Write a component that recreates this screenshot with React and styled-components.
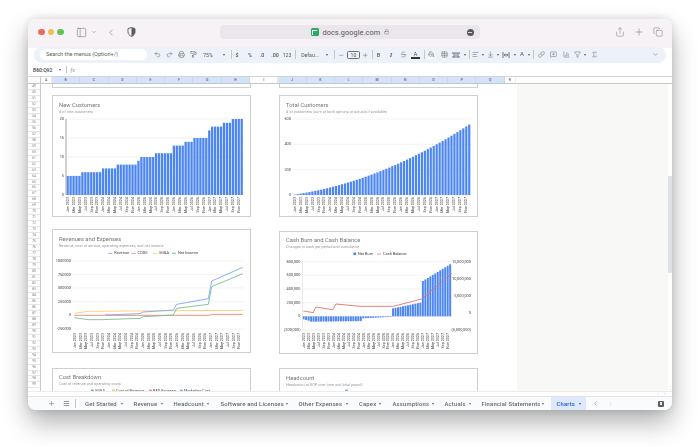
import React from 'react';
import styled, { createGlobalStyle } from 'styled-components';
import {
  PanelLeft, ChevronDown, ChevronLeft, ChevronRight, Share, Plus, Copy, Lock, Undo2, Redo2, Printer, PaintRoller,
  Strikethrough, PaintBucket, Table, AlignLeft, ArrowDownToLine, Link, MessageSquarePlus, ChartColumn, Filter, Sigma, Menu, Minus,
} from 'lucide-react';

const Global = createGlobalStyle`
  html, body { margin: 0; padding: 0; background: #fff; width: 700px; height: 447px; overflow: hidden; }
  * { box-sizing: border-box; }
  body { font-family: Roboto, "Liberation Sans", sans-serif; }
`;

const Page = styled.div`
  width: 700px; height: 447px; padding: 19px 28px 0; background: #fff; overflow: hidden;
`;
const Win = styled.div`
  width: 644px; height: 391px; border-radius: 8px; background: #fff; overflow: hidden; display: flex; flex-direction: column;
  box-shadow: 0 13px 26px rgba(0,0,0,.3), 0 0 10px rgba(0,0,0,.14);
  filter: blur(0.5px);
`;
const TitleBar = styled.div`
  height: 27px; flex: none; background: #f7f2f6; display: flex; align-items: center; padding: 0 9px 1px 10px; color: #6a6a6e;
`;
const Light = styled.span`
  width: 6.5px; height: 6.5px; border-radius: 50%; background: ${p => p.$c}; margin-right: 3.2px; flex: none;
`;
const TitleIcon = styled.span`
  display: flex; align-items: center; justify-content: center; flex: none; width: ${p => p.$w}px; margin-left: ${p => p.$ml}px;
`;
const UrlBar = styled.div`
  position: relative; margin-left: ${p => p.$ml}px; width: 260px; height: 14px; border-radius: 4px; background: #ebe6eb; flex: none;
  display: flex; align-items: center; justify-content: center; gap: 3.5px; color: #55555a;
  font-size: 7.3px; letter-spacing: .1px;
`;
const Favicon = styled.span`
  width: 8px; height: 8px; border-radius: 1.5px; background: #2da866; display: flex; align-items: center; justify-content: center; flex: none;
  &::after { content: ''; width: 4px; height: 4px; border-top: 1px solid #fff; border-left: 1px solid #fff; }
`;
const Reader = styled.span`
  position: absolute; left: 246.5px; top: 3.5px; width: 7px; height: 7px; border-radius: 50%; background: #58585c;
  display: flex; align-items: center; justify-content: center;
  &::after { content: ''; width: 4px; height: 1px; background: #d8d8d8; }
`;
const RightTools = styled.div`
  margin-left: auto; display: flex; align-items: center; gap: 9px;
`;

const ToolArea = styled.div`
  height: 17px; flex: none; padding: 1px 6px 0;
  background: linear-gradient(#f7f2f6 0 2px, #fff 2px);
`;
const Pill = styled.div`
  height: 15.5px; border-radius: 8px; background: #edf2fa; display: flex; align-items: center; padding-left: 6px; color: #54575a; font-size: 5.2px;
`;
const Search = styled.div`
  width: 107px; height: 11px; flex: none; border-radius: 6px; background: #fff; color: #5c5f62; font-size: 5.6px; line-height: 11px; padding-left: 6px; white-space: nowrap;
`;
const Slot = styled.span`
  flex: none; display: flex; align-items: center; justify-content: center; width: ${p => p.$w}px; margin-left: ${p => p.$ml}px; height: 10px; white-space: nowrap;
`;
const Sep = styled.span`
  display: block; width: .6px; height: 9px; background: #c7c7c7;
`;
const Caret = styled.span`
  display: inline-block; flex: none; width: 0; height: 0; border-left: 1.7px solid transparent; border-right: 1.7px solid transparent; border-top: 2px solid ${p => p.$c || '#54575a'};
`;
const SizeBox = styled.span`
  width: 13px; height: 8.5px; border: .8px solid #6b6f72; border-radius: 1.5px; display: flex; align-items: center; justify-content: center; font-size: 5.2px;
`;
const ColorA = styled.span`
  display: flex; flex-direction: column; align-items: center; font-size: 6px; line-height: 6px; font-weight: 400;
  &::after { content: ''; width: 9px; height: 2px; background: ${p => p.$bar}; margin-top: .5px; }
`;
const Fill = styled.span`
  display: flex; flex-direction: column; align-items: center;
  &::after { content: ''; width: 9px; height: 1.5px; background: #fff; margin-top: .5px; }
`;
const Strong = styled.b`font-family: Roboto, sans-serif; font-size: 5.4px; font-weight: 500;`;
const Ital = styled.i`font-family: "Liberation Serif", serif; font-size: 6.5px; font-weight: 700;`;

const FormulaBar = styled.div`
  height: 13px; flex: none; background: #fff; display: flex; align-items: center; padding-left: 5px; font-size: 5.1px; color: #444746;
`;
const NameBox = styled.span`
  width: 26px; font-weight: 500; letter-spacing: -.05px;
`;
const FxSep = styled.span`
  width: .6px; height: 7px; background: #c7c7c7; margin: 0 4px 0 5px;
`;
const Fx = styled.i`
  font-family: "Liberation Serif", serif; font-size: 6px; color: #8a8a8a;
`;

const ColHeader = styled.div`
  height: 8px; flex: none; display: flex; background: #fff; border-top: .6px solid #d4d4d4; border-bottom: 1px solid #c4c7c5;
`;
const Corner = styled.div`
  width: 13px; flex: none; background: #fbfbfb; border-right: 1.2px solid #c4c7c5;
`;
const ColCell = styled.div`
  flex: none; width: ${p => p.$w}px; font-size: 3.4px; line-height: 6.5px; text-align: center; color: #5a5d60; font-weight: 500;
  background: ${p => (p.$on ? '#d3e3fd' : '#fff')}; border-right: .4px solid ${p => (p.$on ? '#c4d6f3' : '#ececec')};
`;

const SheetRow = styled.div`
  height: 307px; flex: none; display: flex; overflow: hidden;
`;
const RowHead = styled.div`
  width: 13px; flex: none; background: #fff; border-right: .8px solid #c9c9c9; overflow: hidden;
`;
const RowNum = styled.div`
  height: 5.97px; font-size: 3.2px; line-height: 5.6px; text-align: center; color: #77797b; border-bottom: .4px solid #e6e6e6;
`;
const Canvas = styled.div`
  width: 476px; flex: none; display: flex; gap: 28px; padding-left: 11px; background: #fff; overflow: hidden;
`;
const ChartCol = styled.div`
  width: 199px; flex: none; display: flex; flex-direction: column;
`;
const Stub = styled.div`
  height: 4px; flex: none; border: 1px solid #cfcfcf; border-top: none;
`;
const Card = styled.div`
  flex: none; height: ${p => p.$h}px; margin-top: ${p => p.$mt}px; border: 1px solid #cfcfcf; background: #fff; overflow: hidden;
`;
const CardHead = styled.div`
  height: ${p => p.$h}px; padding: ${p => p.$pt}px 0 0 6px;
`;
const Title = styled.div`
  font-size: 5.8px; line-height: 8px; color: #757575; white-space: nowrap;
`;
const Sub = styled.div`
  font-size: 3.85px; line-height: 6px; color: #9c9c9c; white-space: nowrap;
`;
const Plot = styled.svg`
  display: block; font-family: Roboto, "Liberation Sans", sans-serif;
`;
const GreyPane = styled.div`
  flex: 1; background: #f8f9f7;
`;
const VScroll = styled.div`
  width: 4px; flex: none; background: #fff; padding-top: 92px; display: flex; flex-direction: column; color: #a8a8a8;
`;
const Thumb = styled.div`
  height: 97px; flex: none; background: #dde0e4; border-radius: 1px;
`;
const VArrows = styled.div`
  margin-top: auto; display: flex; flex-direction: column; align-items: center;
`;
const HScroll = styled.div`
  height: 5px; flex: none; background: #fff; border-top: .6px solid #ececec; display: flex; justify-content: flex-end; align-items: center; gap: 3px; padding-right: 6px; color: #a8a8a8;
`;

const TabBar = styled.div`
  height: 14px; flex: 1; background: #f9fbfd; border-top: .6px solid #e3e3e3; display: flex; align-items: stretch; color: #5b5e61; padding-left: 19px;
`;
const BarIcon = styled.span`
  display: flex; align-items: center; justify-content: center; flex: none; width: ${p => p.$w}px; margin-left: ${p => p.$ml || 0}px; color: ${p => p.$c || 'inherit'};
`;
const Tab = styled.div`
  flex: none; width: ${p => p.$w}px; margin-left: ${p => p.$ml || 0}px; padding: 0 5.5px; display: flex; align-items: center; justify-content: space-between;
  font-size: 5.9px; font-weight: 500; letter-spacing: .17px; white-space: nowrap;
  color: ${p => (p.$on ? '#1a5fd0' : '#66696c')}; background: ${p => (p.$on ? '#dfe9fb' : 'transparent')};
`;
const CornerBtn = styled.span`
  margin-left: auto; margin-right: 8px; align-self: center; width: 6px; height: 6px; border-radius: 1px; background: #5d5f62;
  display: flex; align-items: center; justify-content: center;
  &::after { content: ''; width: 2.6px; height: 2.6px; background: #e9e9e9; }
`;

const ICON = { size: 7, strokeWidth: 1.5 };

function Wrap() {
  return (
    <svg width="8" height="8" viewBox="0 0 8 8" fill="none" stroke="currentColor" strokeWidth=".8">
      <path d="M1 1v6M7 1v6M2.2 4h3.6M3.4 2.8 2.2 4l1.2 1.2M4.6 2.8 5.8 4 4.6 5.2" />
    </svg>
  );
}
function Merge() {
  return (
    <svg width="8" height="8" viewBox="0 0 8 8" fill="none" stroke="currentColor" strokeWidth=".8">
      <path d="M1 1v2h2V1M5 1v2h2V1M1 7V5h2v2M5 7V5h2v2M3 4H5" />
    </svg>
  );
}
function Shield() {
  return (
    <svg width="9" height="10" viewBox="0 0 9 10">
      <path d="M4.5.5 8 1.6v3.2C8 7 6.5 8.6 4.5 9.5 2.5 8.6 1 7 1 4.8V1.6Z" fill="none" stroke="#5a5a5e" strokeWidth=".9" />
      <path d="M4.5.5 8 1.6v3.2C8 7 6.5 8.6 4.5 9.5Z" fill="#5a5a5e" />
    </svg>
  );
}

const tools = [
  { c: 157, w: 8, n: <Undo2 {...ICON} /> },
  { c: 169, w: 8, n: <Redo2 {...ICON} /> },
  { c: 181, w: 8, n: <Printer {...ICON} /> },
  { c: 193, w: 8, n: <PaintRoller {...ICON} /> },
  { c: 208, w: 14, n: '75%' },
  { c: 223.5, w: 4, n: <Caret /> },
  { c: 231, w: 1, n: <Sep /> },
  { c: 237, w: 5, n: <Strong>$</Strong> },
  { c: 250, w: 7, n: <Strong>%</Strong> },
  { c: 262, w: 7, n: <Strong>.0</Strong> },
  { c: 275, w: 9, n: <Strong>.00</Strong> },
  { c: 287, w: 9, n: '123' },
  { c: 295, w: 1, n: <Sep /> },
  { c: 310, w: 22, n: 'Defau...' },
  { c: 327, w: 4, n: <Caret /> },
  { c: 334, w: 1, n: <Sep /> },
  { c: 341, w: 7, n: <Minus size={6.5} strokeWidth={1.6} /> },
  { c: 353.5, w: 13, n: <SizeBox>10</SizeBox> },
  { c: 365, w: 7, n: <Plus size={6.5} strokeWidth={1.6} /> },
  { c: 372, w: 1, n: <Sep /> },
  { c: 378.5, w: 6, n: <Strong>B</Strong> },
  { c: 391, w: 6, n: <Ital>I</Ital> },
  { c: 403, w: 8, n: <Strikethrough size={7} strokeWidth={1.5} /> },
  { c: 415.5, w: 10, n: <ColorA $bar="#333">A</ColorA> },
  { c: 424.5, w: 1, n: <Sep /> },
  { c: 431.5, w: 10, n: <Fill><PaintBucket size={6.5} strokeWidth={1.6} /></Fill> },
  { c: 444, w: 8, n: <Table {...ICON} /> },
  { c: 456, w: 8, n: <Merge /> },
  { c: 465, w: 4, n: <Caret /> },
  { c: 469.5, w: 1, n: <Sep /> },
  { c: 475, w: 8, n: <AlignLeft {...ICON} /> },
  { c: 482.5, w: 4, n: <Caret /> },
  { c: 490, w: 8, n: <ArrowDownToLine {...ICON} /> },
  { c: 498, w: 4, n: <Caret /> },
  { c: 506, w: 8, n: <Wrap /> },
  { c: 514.5, w: 4, n: <Caret /> },
  { c: 522, w: 8, n: <ColorA $bar="transparent">A</ColorA> },
  { c: 529, w: 4, n: <Caret /> },
  { c: 533.5, w: 1, n: <Sep /> },
  { c: 541, w: 8, n: <Link {...ICON} /> },
  { c: 553, w: 8, n: <MessageSquarePlus {...ICON} /> },
  { c: 566, w: 8, n: <ChartColumn {...ICON} /> },
  { c: 577, w: 8, n: <Filter {...ICON} /> },
  { c: 585, w: 4, n: <Caret /> },
  { c: 594, w: 8, n: <Sigma {...ICON} /> },
  { c: 655, w: 8, n: <ChevronDown {...ICON} /> },
];

let prevRight = 147;
const placed = tools.map(t => {
  const ml = t.c - t.w / 2 - prevRight;
  prevRight = t.c + t.w / 2;
  return { ...t, ml };
});

const letters = 'BCDEFGHIJKLMNOPQ'.split('');
const rows = Array.from({ length: 51 }, (_, i) => 49 + i);

const mons = ['Jan', 'Mar', 'May', 'Jul', 'Sep', 'Nov'];
const dateLabels = Array.from({ length: 30 }, (_, i) => `${mons[i % 6]} ${2023 + Math.floor(i / 6)}`);

function XLabels({ x0, step, y }) {
  return dateLabels.map((l, i) => {
    const x = x0 + i * step;
    return (
      <text key={l} x={x} y={y} transform={`rotate(-90 ${x} ${y})`} fontSize="3.7" fill="#3c3c3c" textAnchor="end" dominantBaseline="middle">{l}</text>
    );
  });
}
function YTicks({ items, xEnd, gridFrom, gridTo }) {
  return items.map(([label, y, strong]) => (
    <g key={label}>
      {gridFrom != null && <line x1={gridFrom} x2={gridTo} y1={y} y2={y} stroke={strong ? '#555' : '#ececec'} strokeWidth={strong ? 0.5 : 0.7} />}
      <text x={xEnd} y={y} fontSize="3.9" fill="#444" textAnchor="end" dominantBaseline="middle">{label}</text>
    </g>
  ));
}

const steps = [[5, 5], [6, 7], [7, 5], [8, 7], [9, 1], [10, 5], [11, 6], [13, 4], [14, 3], [15, 5], [17, 1], [18, 4], [19, 3], [20, 4]];
const newCust = steps.flatMap(([v, n]) => Array(n).fill(v));
const total = Array.from({ length: 60 }, (_, i) => 3.27 * (i + 1) + 0.1 * (i + 1) * (i + 1));

function NewCustomers() {
  const x0 = 66.5, w = 2.95, y0 = 195, k = 76 / 20;
  return (
    <Plot width="197" height="101" viewBox="53 115 197 101">
      <YTicks items={[['20', 119], ['15', 138], ['10', 157], ['5', 176], ['0', y0]]} xEnd={64} gridFrom={66} gridTo={243} />
      {newCust.map((v, i) => <rect key={i} x={x0 + i * w} y={y0 - v * k} width={2.3} height={v * k} fill="#4c86f2" />)}
      <rect x={65.3} y={119} width={1.4} height={76} fill="#bdbdbd" />
      <XLabels x0={68} step={5.9} y={197} />
    </Plot>
  );
}
function TotalCustomers() {
  const x0 = 293.5, w = 2.96, y0 = 195, k = 76 / 600;
  return (
    <Plot width="197" height="101" viewBox="280 115 197 101">
      <YTicks items={[['600', 119], ['400', 144.3], ['200', 169.7], ['0', y0]]} xEnd={291} gridFrom={293} gridTo={471} />
      {total.map((v, i) => <rect key={i} x={x0 + i * w} y={y0 - v * k} width={2.2} height={v * k} fill="#4c86f2" />)}
      <XLabels x0={295} step={5.9} y={197} />
    </Plot>
  );
}

const pts3 = a => a.map(([x, y]) => `${30 + x / 3},${225 + y / 3}`).join(' ');
function LegendLine({ x, y, c, label, w = 4 }) {
  return (
    <g>
      <line x1={x} x2={x + w} y1={y} y2={y} stroke={c} strokeWidth=".9" />
      <text x={x + w + 2} y={y} fontSize="3.9" fill="#444" dominantBaseline="middle">{label}</text>
    </g>
  );
}
function Revenues() {
  return (
    <Plot width="197" height="101" viewBox="53 250 197 101">
      <LegendLine x={108.3} y={253.3} c="#7ba7f5" label="Revenue" />
      <LegendLine x={131.5} y={253.3} c="#ea8a80" label="COGS" />
      <LegendLine x={153} y={253.3} c="#f8cf6c" label="SG&A" />
      <LegendLine x={172} y={253.3} c="#72bd85" label="Net Income" />
      <YTicks
        items={[['1000000', 261], ['750000', 274.5], ['500000', 288], ['250000', 301.7], ['0', 315.3], ['-250000', 329]]}
        xEnd={71} gridFrom={73} gridTo={243}
      />
      <polyline fill="none" stroke="#f9cf6b" strokeWidth=".9" points={pts3([[133, 265], [175, 259], [430, 257], [638, 256]])} />
      <polyline fill="none" stroke="#e98a80" strokeWidth=".9" points={pts3([[133, 271], [430, 271], [535, 271], [545, 268], [638, 268]])} />
      <polyline fill="none" stroke="#7ba7f5" strokeWidth=".9" points={pts3([[225, 270], [330, 266], [340, 261], [430, 255], [440, 238], [535, 221], [545, 168], [638, 127]])} />
      <polyline fill="none" stroke="#78c08a" strokeWidth=".9" points={pts3([[133, 278], [175, 284], [215, 284], [330, 280], [340, 275], [430, 270], [440, 250], [535, 238], [545, 185], [638, 146]])} />
      <XLabels x0={75} step={5.67} y={333} />
    </Plot>
  );
}

const burn = Array.from({ length: 60 }, (_, i) => {
  if (i < 3) return -(9 + i * 2);
  if (i < 24) return -16 + (i - 3) * 0.08;
  if (i < 36) return -6 + (i - 24) * 0.4;
  if (i < 48) return 24 + (i - 36) * 1.55;
  return 106 + (i - 48) * 4.55;
});
function CashBurn() {
  const x0 = 302.7, w = 2.483, y0 = 225 + 274 / 3;
  return (
    <Plot width="197" height="101" viewBox="280 252 197 101">
      <rect x={353.5} y={252.5} width={2.6} height={2.6} fill="#4c86f2" />
      <text x={358} y={254} fontSize="3.9" fill="#444" dominantBaseline="middle">Net Burn</text>
      <line x1={377} x2={381} y1={254} y2={254} stroke="#ea8a80" strokeWidth=".9" />
      <text x={383} y={254} fontSize="3.9" fill="#444" dominantBaseline="middle">Cash Balance</text>
      <YTicks
        items={[['800,000', 261.7], ['600,000', 275.3], ['400,000', 289], ['200,000', 302.7], ['0', 316.3], ['(200,000)', 330]]}
        xEnd={300.5} gridFrom={302.5} gridTo={452}
      />
      <YTicks items={[['15,000,000', 261.7], ['10,000,000', 278.7], ['5,000,000', 296], ['0', 313], ['(5,000,000)', 330]]} xEnd={471} />
      {burn.map((v, i) => <rect key={i} x={x0 + i * w} y={(v > 0 ? y0 - v / 3 : y0)} width={1.95} height={Math.abs(v) / 3} fill="#4c86f2" />)}
      <line x1={302.5} x2={302.5} y1={261} y2={330} stroke="#dcdcdc" strokeWidth=".6" />
      <polyline fill="none" stroke="#e57368" strokeWidth=".9"
        points={[[100, 258], [130, 263], [137, 246], [188, 254], [198, 237], [270, 244], [370, 244], [455, 222], [545, 145]].map(([x, y]) => `${270 + x / 3},${225 + y / 3}`).join(' ')} />
      <XLabels x0={304} step={4.97} y={333} />
    </Plot>
  );
}
function CostLegend() {
  return (
    <Plot width="197" height="10" viewBox="53 388 197 10">
      {[[91, '#6cbb80', 'SG&A'], [112, '#f8cf6c', 'Cost of Revenue'], [149, '#e98a80', 'R&D Expense'], [180, '#7ba7f5', 'Marketing Cost']].map(([x, c, l]) => (
        <g key={l}>
          <rect x={x} y={389.6} width={2.8} height={2.8} fill={c} />
          <text x={x + 4} y={391.2} fontSize="3.9" fill="#444" dominantBaseline="middle">{l}</text>
        </g>
      ))}
    </Plot>
  );
}
function HeadLegend() {
  return (
    <Plot width="197" height="10" viewBox="280 388 197 10">
      <rect x={345} y={389.6} width={2.8} height={2.8} fill="#7ba7f5" />
    </Plot>
  );
}

const tabs = [
  ['Get Started', 48.5, 0], ['Revenue', 40, 0], ['Headcount', 46.5, 0], ['Software and Licenses', 78, 0.5],
  ['Other Expenses', 60, 0], ['Capex', 33, 0.5], ['Assumptions', 52, 0.5], ['Actuals', 37, 0], ['Financial Statements', 73, 0],
];

export default function App() {
  return (
    <Page>
      <Global />
      <Win>
        <TitleBar>
          <Light $c="#ed6a5f" /><Light $c="#f5bd4f" /><Light $c="#61c454" />
          <TitleIcon $w={11} $ml={8.5}><PanelLeft size={11} strokeWidth={1.1} /></TitleIcon>
          <TitleIcon $w={6} $ml={4}><ChevronDown size={6} strokeWidth={1.6} /></TitleIcon>
          <TitleIcon $w={10} $ml={9}><ChevronLeft size={11} strokeWidth={1.3} /></TitleIcon>
          <TitleIcon $w={9} $ml={11}><Shield /></TitleIcon>
          <UrlBar $ml={84.5}>
            <Favicon />
            <span>docs.google.com</span>
            <Lock size={5.5} strokeWidth={1.6} />
            <Reader />
          </UrlBar>
          <RightTools>
            <Share size={10} strokeWidth={1.1} />
            <Plus size={10} strokeWidth={1.2} />
            <Copy size={10} strokeWidth={1.1} />
          </RightTools>
        </TitleBar>

        <ToolArea>
          <Pill>
            <Search>Search the menus (Option+/)</Search>
            {placed.map((t, i) => <Slot key={i} $w={t.w} $ml={t.ml}>{t.n}</Slot>)}
          </Pill>
        </ToolArea>

        <FormulaBar>
          <NameBox>B60:Q92</NameBox>
          <Caret />
          <FxSep />
          <Fx>fx</Fx>
        </FormulaBar>

        <ColHeader>
          <Corner />
          <ColCell $w={11}>A</ColCell>
          {letters.map(l => <ColCell key={l} $w={28.3} $on={l !== 'I'}>{l}</ColCell>)}
          <ColCell $w={11.2}>R</ColCell>
        </ColHeader>

        <SheetRow>
          <RowHead>{rows.map(r => <RowNum key={r}>{r}</RowNum>)}</RowHead>
          <Canvas>
            <ChartCol>
              <Stub />
              <Card $h={122} $mt={7}>
                <CardHead $h={19} $pt={5}><Title>New Customers</Title><Sub># of new customers</Sub></CardHead>
                <NewCustomers />
              </Card>
              <Card $h={123.5} $mt={12}>
                <CardHead $h={20} $pt={4.7}><Title>Revenues and Expenses</Title><Sub>Revenue, cost of service, operating expenses, and net income</Sub></CardHead>
                <Revenues />
              </Card>
              <Card $h={40} $mt={15.5}>
                <CardHead $h={19} $pt={4}><Title>Cost Breakdown</Title><Sub>Cost of revenue and operating costs</Sub></CardHead>
                <CostLegend />
              </Card>
            </ChartCol>
            <ChartCol>
              <Stub />
              <Card $h={122} $mt={7}>
                <CardHead $h={19} $pt={5}><Title>Total Customers</Title><Sub># of customers (sum of both options or actuals if available)</Sub></CardHead>
                <TotalCustomers />
              </Card>
              <Card $h={122.5} $mt={14}>
                <CardHead $h={20} $pt={4}><Title>Cash Burn and Cash Balance</Title><Sub>Changes in cash per period and cumulative</Sub></CardHead>
                <CashBurn />
              </Card>
              <Card $h={40} $mt={14.5}>
                <CardHead $h={19} $pt={4.7}><Title>Headcount</Title><Sub>Headcount at EOP over time and total payroll</Sub></CardHead>
                <HeadLegend />
              </Card>
            </ChartCol>
          </Canvas>
          <GreyPane />
          <VScroll>
            <Thumb />
            <VArrows>
              <ChevronDown size={3} strokeWidth={2} transform="rotate(180)" />
              <ChevronDown size={3} strokeWidth={2} />
            </VArrows>
          </VScroll>
        </SheetRow>
        <HScroll>
          <ChevronLeft size={3.5} strokeWidth={2} />
          <ChevronRight size={3.5} strokeWidth={2} />
        </HScroll>

        <TabBar>
          <BarIcon $w={8}><Plus size={7} strokeWidth={1.6} /></BarIcon>
          <BarIcon $w={8} $ml={7}><Menu size={7} strokeWidth={2.2} /></BarIcon>
          <BarIcon $w={1} $ml={5}><Sep /></BarIcon>
          {tabs.map(([t, w, ml], i) => (
            <Tab key={t} $w={w} $ml={i === 0 ? 3.5 : ml}>{t}<Caret $c="#66696c" /></Tab>
          ))}
          <Tab $w={35} $ml={2} $on>Charts<Caret $c="#1a5fd0" /></Tab>
          <BarIcon $w={8} $ml={5}><ChevronLeft size={7} strokeWidth={1.6} /></BarIcon>
          <BarIcon $w={8} $ml={7} $c="#c4c6c9"><ChevronRight size={7} strokeWidth={1.6} /></BarIcon>
          <CornerBtn />
        </TabBar>
      </Win>
    </Page>
  );
}
